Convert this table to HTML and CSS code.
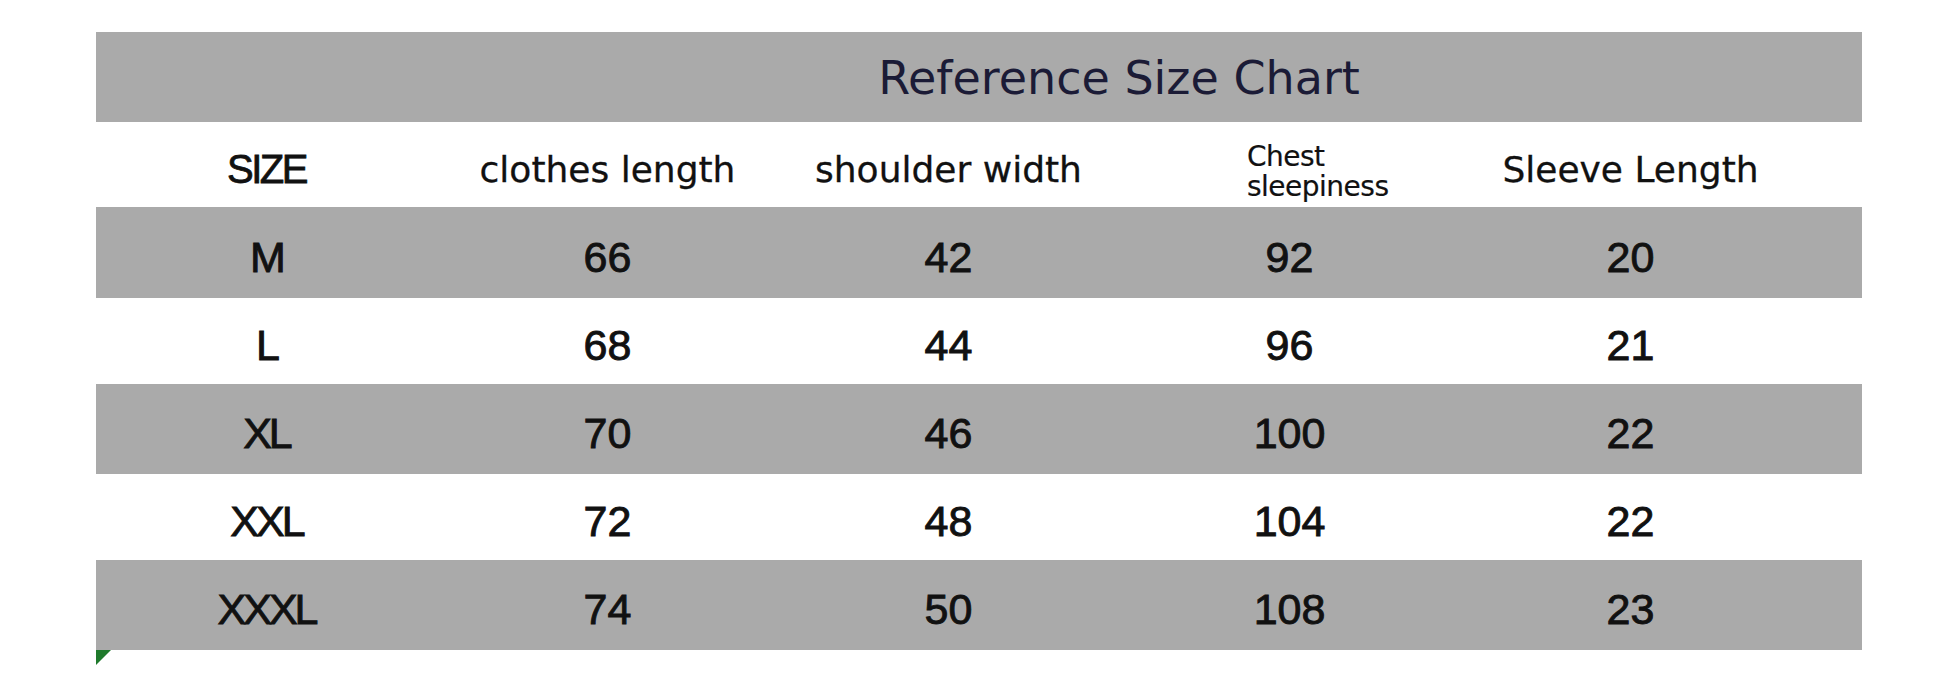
FILE: index.html
```html
<!DOCTYPE html>
<html lang="en">
<head>
<meta charset="utf-8">
<title>Reference Size Chart</title>
<link rel="stylesheet" href="styles.css">
</head>
<body>
<div class="chart">
  <div class="row row-title grey">
    <div class="title">Reference Size Chart</div>
  </div>
  <div class="row row-head">
    <div class="cell size-label">SIZE</div>
    <div class="cell head">clothes length</div>
    <div class="cell head">shoulder width</div>
    <div class="cell head-small"><span>Chest<br>sleepiness</span></div>
    <div class="cell head">Sleeve Length</div>
  </div>
  <div class="row row-data grey r-m">
    <div class="cell num size">M</div>
    <div class="cell num">66</div>
    <div class="cell num">42</div>
    <div class="cell num">92</div>
    <div class="cell num">20</div>
  </div>
  <div class="row row-data r-l">
    <div class="cell num size">L</div>
    <div class="cell num">68</div>
    <div class="cell num">44</div>
    <div class="cell num">96</div>
    <div class="cell num">21</div>
  </div>
  <div class="row row-data grey r-xl">
    <div class="cell num size">XL</div>
    <div class="cell num">70</div>
    <div class="cell num">46</div>
    <div class="cell num">100</div>
    <div class="cell num">22</div>
  </div>
  <div class="row row-data r-xxl">
    <div class="cell num size">XXL</div>
    <div class="cell num">72</div>
    <div class="cell num">48</div>
    <div class="cell num">104</div>
    <div class="cell num">22</div>
  </div>
  <div class="row row-data grey r-xxxl">
    <div class="cell num size">XXXL</div>
    <div class="cell num">74</div>
    <div class="cell num">50</div>
    <div class="cell num">108</div>
    <div class="cell num">23</div>
  </div>
  <div class="marker"></div>
</div>
</body>
</html>
```

FILE: styles.css
```css
html, body {
  margin: 0;
  padding: 0;
  background: #ffffff;
}

body {
  width: 1946px;
  height: 675px;
  overflow: hidden;
}

.chart {
  position: relative;
  margin: 32px 0 0 96px;
  width: 1766px;
}

.row {
  display: grid;
  grid-template-columns: repeat(5, 341px) 1fr;
  height: 85px;
}

.row.grey {
  background: #aaaaaa;
}

.row-title { height: 90px; }
.r-m { height: 91px; }
.r-l { height: 86px; }
.r-xl { height: 90px; }
.r-xxl { height: 86px; }
.r-xxxl { height: 90px; }

.row-title .title {
  grid-column: 2 / 6;
  display: flex;
  align-items: center;
  justify-content: center;
  font-family: "DejaVu Sans", sans-serif;
  font-size: 46px;
  color: #1b1b36;
  padding-top: 2px;
}

.cell {
  display: flex;
  align-items: center;
  justify-content: center;
  color: #111111;
  white-space: nowrap;
}

.row-head .cell {
  padding-top: 10px;
}

.size-label {
  font-family: "Liberation Sans", Arial, sans-serif;
  font-size: 40px;
  letter-spacing: -2.5px;
  -webkit-text-stroke: 0.8px #111111;
}

.head {
  font-family: "DejaVu Sans", sans-serif;
  font-size: 36px;
  -webkit-text-stroke: 0.3px #111111;
}

.row-head .head-small {
  justify-content: flex-start;
  align-items: flex-start;
  padding: 20px 0 0 128px;
  font-family: "DejaVu Sans", sans-serif;
  font-size: 28px;
  line-height: 30px;
  letter-spacing: -0.5px;
  -webkit-text-stroke: 0.2px #111111;
}

.row-data .cell {
  font-family: "Liberation Sans", Arial, sans-serif;
  font-size: 43px;
  padding-top: 9px;
  -webkit-text-stroke: 0.9px #111111;
}

.row-data .size {
  letter-spacing: -3px;
}

.marker {
  position: absolute;
  left: 0;
  top: 100%;
  width: 0;
  height: 0;
  border-top: 15px solid #1f7a2c;
  border-right: 15px solid transparent;
}
```
